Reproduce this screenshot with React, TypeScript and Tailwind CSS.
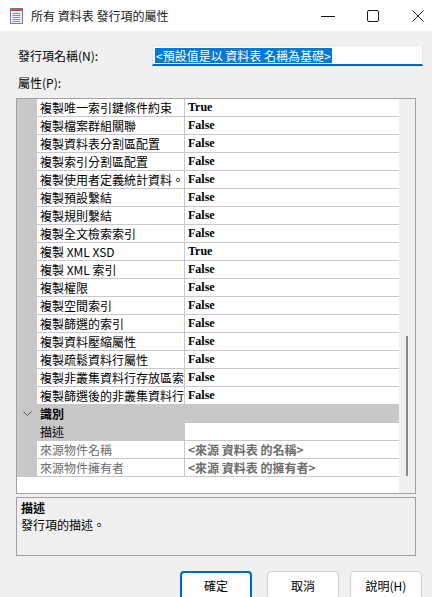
import React from "react";

const ui = "font-['Segoe_UI','Noto_Sans_CJK_TC',sans-serif]";
const cjk = "font-['Noto_Sans_CJK_TC','Noto_Sans_CJK_SC',sans-serif]";
const serif = "font-['Liberation_Serif','Noto_Sans_CJK_TC',serif]";

type Row = { name: string; value: string };

const rows: Row[] = [
  { name: "複製唯一索引鍵條件約束", value: "True" },
  { name: "複製檔案群組關聯", value: "False" },
  { name: "複製資料表分割區配置", value: "False" },
  { name: "複製索引分割區配置", value: "False" },
  { name: "複製使用者定義統計資料。", value: "False" },
  { name: "複製預設繫結", value: "False" },
  { name: "複製規則繫結", value: "False" },
  { name: "複製全文檢索索引", value: "False" },
  { name: "複製 XML XSD", value: "True" },
  { name: "複製 XML 索引", value: "False" },
  { name: "複製權限", value: "False" },
  { name: "複製空間索引", value: "False" },
  { name: "複製篩選的索引", value: "False" },
  { name: "複製資料壓縮屬性", value: "False" },
  { name: "複製疏鬆資料行屬性", value: "False" },
  { name: "複製非叢集資料行存放區索引", value: "False" },
  { name: "複製篩選後的非叢集資料行存放區索引", value: "False" },
];

function TitleIcon() {
  return (
    <svg width="13" height="16" viewBox="0 0 13 16">
      <rect x="0.5" y="0.5" width="12" height="15" fill="#f4f6f9" stroke="#6a7f99" />
      <rect x="1" y="1" width="11" height="2" fill="#d9483b" />
      {[5, 7, 9, 11, 13].map((y) => (
        <line key={y} x1="2.5" y1={y + 0.5} x2="10.5" y2={y + 0.5} stroke="#7d8fa6" />
      ))}
    </svg>
  );
}

function PropRow({ name, value }: Row) {
  return (
    <div className="flex h-[18px]">
      <div className="w-[20px] shrink-0 bg-[#c8c8c8]" />
      <div className={`w-[148px] shrink-0 border-b border-r border-[#c8c8c8] bg-white pl-[3px] text-[12px] leading-[17px] text-black whitespace-nowrap overflow-hidden ${cjk}`}>
        {name}
      </div>
      <div className={`flex-1 border-b border-[#c8c8c8] bg-white pl-[3px] text-[12px] leading-[17px] font-bold text-black ${serif}`}>
        {value}
      </div>
    </div>
  );
}

export default function App() {
  return (
    <div className={`w-[432px] h-[597px] overflow-hidden bg-[#f0f0f0] text-black ${ui}`}>
      <div className="flex h-[31px] items-center bg-white pl-[10px]">
        <TitleIcon />
        <span className={`ml-[8px] text-[12px] text-[#1a1a1a] ${cjk}`}>所有 資料表 發行項的屬性</span>
        <div className="ml-auto -mr-[8px] flex h-full">
          <div className="flex w-[45px] items-center justify-center">
            <svg width="14" height="14" viewBox="0 0 14 14"><line x1="0" y1="7.5" x2="14" y2="7.5" stroke="#1a1a1a" /></svg>
          </div>
          <div className="flex w-[45px] items-center justify-center">
            <svg width="12" height="12" viewBox="0 0 12 12"><rect x="0.5" y="0.5" width="11" height="11" rx="1.5" fill="none" stroke="#1a1a1a" /></svg>
          </div>
          <div className="flex w-[45px] items-center justify-center">
            <svg width="12" height="12" viewBox="0 0 12 12"><path d="M0.5 0.5 L11.5 11.5 M11.5 0.5 L0.5 11.5" stroke="#1a1a1a" /></svg>
          </div>
        </div>
      </div>

      <div className="mt-[14px] flex h-[21px] items-center">
        <span className={`ml-[18px] w-[134px] text-[12px] ${cjk}`}>發行項名稱(N):</span>
        <div className="flex h-[21px] w-[271px] items-center border border-[#e6e6e6] border-b-2 border-b-[#0067c0] bg-[#fdfdfd] pl-[2px]">
          <span className={`bg-[#0078d7] px-[1px] text-[12px] leading-[15px] text-white ${cjk}`}>&lt;預設值是以 資料表 名稱為基礎&gt;</span>
        </div>
      </div>

      <div className={`ml-[18px] mt-[8px] h-[18px] text-[12px] leading-[18px] ${cjk}`}>屬性(P):</div>

      <div className="mx-[16px] mt-[6px] flex h-[396px] border border-[#a0a0a0] bg-white">
        <div className="flex flex-1 flex-col">
          {rows.map((r) => (
            <PropRow key={r.name} {...r} />
          ))}
          <div className="flex h-[18px] items-center border-b border-[#c8c8c8] bg-[#c8c8c8]">
            <div className="flex w-[20px] justify-center">
              <svg width="9" height="6" viewBox="0 0 9 6"><path d="M0.5 0.5 L4.5 4.5 L8.5 0.5" fill="none" stroke="#555" /></svg>
            </div>
            <span className={`pl-[3px] text-[12px] font-bold ${cjk}`}>識別</span>
          </div>
          <div className="flex h-[18px]">
            <div className="w-[20px] shrink-0 bg-[#c8c8c8]" />
            <div className={`w-[148px] shrink-0 bg-[#c8c8c8] pl-[3px] text-[12px] leading-[17px] ${cjk}`}>描述</div>
            <div className="flex-1 border-b border-[#c8c8c8] bg-white" />
          </div>
          {[
            ["來源物件名稱", "<來源 資料表 的名稱>"],
            ["來源物件擁有者", "<來源 資料表 的擁有者>"],
          ].map(([n, v]) => (
            <div key={n} className="flex h-[18px]">
              <div className="w-[20px] shrink-0 bg-[#c8c8c8]" />
              <div className={`w-[148px] shrink-0 border-b border-r border-[#c8c8c8] pl-[3px] text-[12px] leading-[17px] text-[#6d6d6d] ${cjk}`}>{n}</div>
              <div className={`flex-1 border-b border-[#c8c8c8] pl-[3px] text-[12px] leading-[17px] font-bold text-[#6d6d6d] ${cjk}`}>{v}</div>
            </div>
          ))}
        </div>
        <div className="flex w-[16px] shrink-0 justify-center bg-[#f0f0f0] pt-[237px]">
          <div className="h-[140px] w-[2px] bg-[#8a8a8a]" />
        </div>
      </div>

      <div className={`mx-[16px] mt-[3px] h-[59px] border border-[#a0a0a0] px-[4px] pt-[1px] text-[12px] leading-[17px] ${cjk}`}>
        <div className="font-bold">描述</div>
        <div>發行項的描述。</div>
      </div>

      <div className={`mt-[15px] flex text-[12px] ${cjk}`}>
        <button className="ml-[180px] h-[29px] w-[72px] rounded-[4px] border-2 border-[#0067c0] bg-[#fdfdfd]">確定</button>
        <button className="ml-[15px] h-[29px] w-[72px] rounded-[4px] border border-[#d0d0d0] bg-[#fdfdfd]">取消</button>
        <button className="ml-[11px] h-[29px] w-[72px] rounded-[4px] border border-[#d0d0d0] bg-[#fdfdfd]">說明(H)</button>
      </div>
    </div>
  );
}
